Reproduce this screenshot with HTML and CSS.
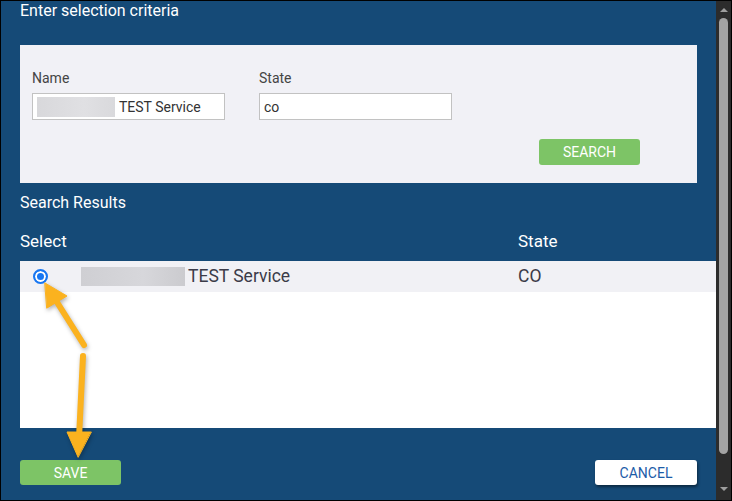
FILE: index.html
```html
<!DOCTYPE html>
<html lang="en">
<head>
    <meta charset="UTF-8">
    <meta name="viewport" content="width=device-width, initial-scale=1.0">
    <title>Enter selection criteria</title>
    <link rel="stylesheet" href="styles.css">
</head>
<body>
    <div class="dialog">
        <div class="content">
            <h2 class="title">Enter selection criteria</h2>

            <div class="criteria">
                <div class="fields">
                    <div class="form-group">
                        <label for="name">Name</label>
                        <div class="input">
                            <span class="blur blur-small"></span>
                            <span>TEST Service</span>
                        </div>
                    </div>
                    <div class="form-group">
                        <label for="state">State</label>
                        <div class="input">co</div>
                    </div>
                </div>
                <div class="search-row">
                    <button class="btn btn-green">SEARCH</button>
                </div>
            </div>

            <h3 class="results-title">Search Results</h3>
            <div class="results-head">
                <span class="col-select">Select</span>
                <span class="col-state">State</span>
            </div>
            <div class="results">
                <div class="row selected">
                    <span class="col-radio"><span class="radio"></span></span>
                    <span class="col-name">
                        <span class="blur blur-large"></span>TEST Service
                    </span>
                    <span class="col-state">CO</span>
                </div>
            </div>

            <div class="actions">
                <button class="btn btn-green">SAVE</button>
                <button class="btn btn-white">CANCEL</button>
            </div>
        </div>

        <div class="scrollbar">
            <span class="arrow-up"></span>
            <span class="thumb"></span>
            <span class="arrow-down"></span>
        </div>

        <!-- callout arrows drawn over the dialog -->
        <svg class="callouts" width="732" height="501" viewBox="0 0 732 501">
            <g fill="#fbb21f" stroke="#fbb21f" stroke-linecap="round">
                <line x1="84" y1="345" x2="55" y2="299" stroke-width="6"/>
                <polygon points="45,283 67,296 47,308" stroke-width="1"/>
                <line x1="83" y1="356" x2="79" y2="438" stroke-width="6"/>
                <polygon points="78,457 67,432 91,432" stroke-width="1"/>
            </g>
        </svg>
    </div>
</body>
</html>
```

FILE: styles.css
```css
body {
    margin: 0;
    font-family: Roboto, "Liberation Sans", sans-serif;
}
.dialog {
    position: relative;
    display: flex;
    width: 732px;
    height: 501px;
    box-sizing: border-box;
    border: 1px solid #000;
    background-color: #154a77;
}
.content {
    flex: 1;
    display: flex;
    flex-direction: column;
    padding-left: 19px;
}
.title {
    margin: 0;
    font-size: 16px;
    font-weight: normal;
    line-height: 20px;
    color: #fff;
}
.criteria {
    margin: 24px 19px 0 0;
    height: 138px;
    box-sizing: border-box;
    padding: 25px 12px 0;
    background-color: #f1f1f6;
}
.fields {
    display: flex;
    gap: 34px;
}
label {
    display: block;
    margin-bottom: 6px;
    font-size: 14px;
    line-height: 17px;
    color: #444;
}
.input {
    display: flex;
    align-items: center;
    width: 193px;
    height: 27px;
    box-sizing: border-box;
    padding: 0 4px;
    border: 1px solid #c2c2c2;
    background-color: #fff;
    font-size: 14px;
    color: #333;
}
.blur {
    display: inline-block;
    background: linear-gradient(90deg, #d8d8db, #e0e0e3 60%, #d9d9dc);
}
.blur-small {
    width: 78px;
    height: 20px;
    margin-right: 4px;
}
.blur-large {
    width: 104px;
    height: 19px;
    margin-right: 3px;
    background: linear-gradient(90deg, #cfcfd3, #d7d7db 60%, #cbcbcf);
}
.search-row {
    display: flex;
    justify-content: flex-end;
    padding-right: 45px;
    margin-top: 19px;
}
.btn {
    width: 101px;
    height: 26px;
    padding: 0;
    border: none;
    border-radius: 3px;
    font-family: Roboto, "Liberation Sans", sans-serif;
    font-size: 14px;
    cursor: pointer;
}
.btn-green {
    background-color: #7dc466;
    color: #fff;
}
.btn-white {
    width: 102px;
    background-color: #fff;
    color: #1c5ca8;
    box-shadow: 1px 2px 3px rgba(0, 0, 0, 0.45);
}
.results-title {
    margin: 10px 0 0;
    font-size: 16px;
    font-weight: normal;
    line-height: 20px;
    color: #fff;
}
.results-head {
    display: flex;
    align-items: flex-end;
    height: 48px;
    box-sizing: border-box;
    padding-bottom: 10px;
    font-size: 17px;
    line-height: 20px;
    color: #fff;
}
.col-select {
    width: 498px;
}
.results {
    height: 167px;
    background-color: #fff;
}
.row {
    display: flex;
    align-items: center;
    height: 31px;
    padding-bottom: 1px;
    box-sizing: border-box;
    font-size: 17.5px;
    color: #3b3b48;
}
.row.selected {
    background-color: #f1f1f5;
}
.col-radio {
    width: 61px;
    padding-left: 13px;
    box-sizing: border-box;
    display: flex;
}
.radio {
    width: 15px;
    height: 15px;
    box-sizing: border-box;
    border: 2px solid #1877f2;
    border-radius: 50%;
    background-color: #1877f2;
    box-shadow: inset 0 0 0 2px #fff;
}
.col-name {
    display: flex;
    align-items: center;
    width: 437px;
}
.actions {
    display: flex;
    justify-content: space-between;
    margin: 32px 19px 0 0;
}
.actions .btn {
    height: 25px;
}
.scrollbar {
    display: flex;
    flex-direction: column;
    align-items: center;
    width: 15px;
    background-color: #2c2c2c;
}
.arrow-up,
.arrow-down {
    width: 0;
    height: 0;
    border-left: 4px solid transparent;
    border-right: 4px solid transparent;
}
.arrow-up {
    margin-top: 7px;
    border-bottom: 4px solid #9e9e9e;
}
.arrow-down {
    margin-top: 33px;
    border-top: 4px solid #9e9e9e;
}
.thumb {
    width: 9px;
    height: 436px;
    margin-top: 6px;
    border-radius: 5px;
    background-color: #a3a3a3;
}
.callouts {
    position: absolute;
    left: -1px;
    top: -1px;
    pointer-events: none;
    filter: drop-shadow(1px 2px 2px rgba(0, 0, 0, 0.3));
}
```
